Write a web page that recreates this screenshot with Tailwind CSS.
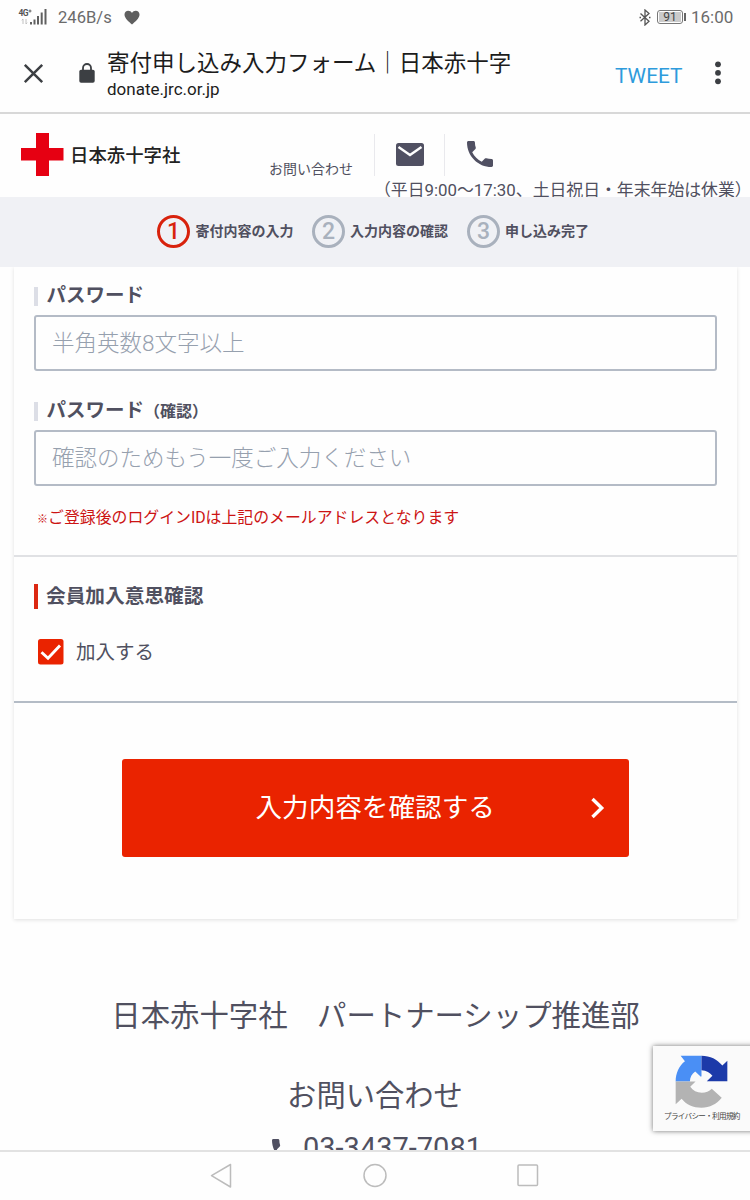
<!DOCTYPE html>
<html lang="ja">
<head>
<meta charset="utf-8">
<title>寄付申し込み入力フォーム｜日本赤十字社</title>
<script src="https://cdn.jsdelivr.net/npm/@tailwindcss/browser@4"></script>
</head>
<body class="bg-white">
<div class="relative flex h-[1200px] w-[750px] flex-col overflow-hidden bg-[#fefefe] font-[Roboto,'Noto_Sans_CJK_JP',sans-serif] text-[#505060]">

  <!-- Status bar -->
  <div class="flex h-[34px] shrink-0 items-center pl-[18px] pr-[17px] text-[16.600px] leading-[34px] text-[#6b6b6b]">
    <svg class="h-[18px] w-[30px]" viewBox="0 0 30 18">
      <text x="0.5" y="7.5" font-family="Roboto" font-weight="700" font-size="8.5" fill="#555" textLength="10">4G</text>
      <path d="M10.5 3h3M12 1.500v3" stroke="#555" stroke-width="0.9"/>
      <path d="M5 11v5M3.800 12.300L5 11M8 11v5M9.200 14.700L8 16" stroke="#bbb" stroke-width="0.9" fill="none"/>
      <path d="M13 14v2.500M16.500 11.500v5M20 8v8.500M23.700 4.500v12M27.500 1v15.500" stroke="#606060" stroke-width="2"/>
    </svg>
    <span class="ml-[10px] w-[66px] pt-px">246B/s</span>
    <svg class="h-[15px] w-[16px]" viewBox="0 0 16 15"><path d="M8 14.500C5 12 .5 8.500.5 4.600.5 2.200 2.200.7 4.200.7c1.600 0 3 .8 3.800 2.200C8.800 1.500 10.200.7 11.800.7c2 0 3.700 1.500 3.700 3.900C15.500 8.500 11 12 8 14.500z" fill="#5f5f5f"/></svg>
    <div class="ml-auto flex items-center">
      <svg class="h-[17px] w-[12px]" viewBox="0 0 12 17"><path d="M1.500 4.500l8.500 7.800-4 3.700V1l4 3.500-8.500 7.800" fill="none" stroke="#555" stroke-width="1.300"/><path d="M.5 8.400h1.500M10 8.400h1.500" stroke="#555" stroke-width="1.500"/></svg>
      <span class="ml-[6px] flex h-[14px] w-[26px] items-center justify-center rounded-[3px] border border-[#777] p-px"><span class="h-full w-full bg-[#cbcbcb] text-center text-[12px] leading-[11px] text-[#444]">91</span></span>
      <span class="ml-px h-[8px] w-[2px] bg-[#666]"></span>
      <span class="ml-[5px] w-[42px] text-[17px]">16:00</span>
    </div>
  </div>

  <!-- Browser toolbar -->
  <div class="flex h-[80px] shrink-0 items-center border-b-2 border-[#d8d8d8] pl-[23px]">
    <svg class="h-[21px] w-[21px]" viewBox="0 0 21 21"><path d="M1.800 1.800l17.400 17.400M19.200 1.800L1.800 19.200" stroke="#3c3f43" stroke-width="2.500"/></svg>
    <svg class="ml-[35px] h-[20px] w-[16px]" viewBox="0 0 16 20"><rect x=".3" y="6.700" width="15.400" height="13" rx="1.800" fill="#3c3f43"/><path d="M4 7.500V5a4 4 0 0 1 8 0v2.500" fill="none" stroke="#3c3f43" stroke-width="1.800"/></svg>
    <div class="ml-[12px] h-[78px] w-[430px] pt-[14px] text-[#1c1c1c]">
      <div class="h-[30px] whitespace-nowrap text-[22.5px] leading-[30px]">寄付申し込み入力フォーム｜日本赤十字</div>
      <div class="h-[22px] text-[17px] leading-[22px]">donate.jrc.or.jp</div>
    </div>
    <span class="ml-[78px] w-[68px] pt-[7px] text-[20.900px] text-[#2e9bdc]">TWEET</span>
    <svg class="ml-[31px] h-[24px] w-[8px]" viewBox="0 0 8 24"><g fill="#3c3f43"><circle cx="4" cy="3.300" r="2.900"/><circle cx="4" cy="11.800" r="2.900"/><circle cx="4" cy="20.300" r="2.900"/></g></svg>
  </div>

  <!-- Site header -->
  <header class="flex h-[83px] shrink-0 overflow-hidden">
    <div class="flex w-[255px] items-start pl-[21px] pt-[19px]">
      <svg class="h-[43px] w-[43px]" viewBox="0 0 43 43"><path d="M15 0h13v15h14.500v12.500H28V43H15V27.500H0V15h15z" fill="#e60012"/></svg>
      <span class="ml-[6px] mt-[7px] whitespace-nowrap text-[18.400px] font-medium leading-[32px] text-[#222]">日本赤十字社</span>
    </div>
    <span class="w-[119px] pl-[14px] pt-[45px] text-[14px] leading-[20px]">お問い合わせ</span>
    <div class="w-[376px]">
      <div class="mt-[20px] flex h-[42px] border-l border-[#e9e9ed]">
        <div class="flex w-[70px] items-center justify-center border-r border-[#e9e9ed]">
          <svg class="h-[24px] w-[28px]" viewBox="0 0 28 24"><rect width="28" height="23" rx="2.500" fill="#505062"/><path d="M2.500 4L14 12 25.500 4" fill="none" stroke="#fefefe" stroke-width="2.400"/></svg>
        </div>
        <svg class="ml-[22px] mt-[7px] h-[26px] w-[26px]" viewBox="3 3 18 18"><path d="M6.620 10.790c1.440 2.830 3.760 5.140 6.590 6.590l2.200-2.200c.27-.27.670-.36 1.020-.24 1.120.37 2.330.57 3.570.57.55 0 1 .45 1 1V20c0 .55-.45 1-1 1-9.390 0-17-7.610-17-17 0-.55.45-1 1-1h3.500c.55 0 1 .45 1 1 0 1.250.2 2.450.57 3.570.11.35.03.74-.25 1.020l-2.200 2.200z" fill="#505062"/></svg>
      </div>
      <div class="mt-[2px] h-[19px] whitespace-nowrap text-[16.850px] leading-[24px]">（平日9:00〜17:30、土日祝日・年末年始は休業）</div>
    </div>
  </header>

  <!-- Steps -->
  <ol class="flex h-[70px] shrink-0 items-center bg-[#f0f1f5] pb-px pl-[157px] text-[14px] font-bold">
    <li class="flex w-[155px] items-center"><span class="mr-[5.500px] flex h-[33px] w-[33px] items-center justify-center rounded-full border-[3px] border-[#d8220c] text-[23px] font-medium leading-none text-[#d8220c]">1</span>寄付内容の入力</li>
    <li class="flex w-[155px] items-center"><span class="mr-[5px] flex h-[33px] w-[33px] items-center justify-center rounded-full border-[3px] border-[#a9b1bd] text-[23px] font-medium leading-none text-[#a9b1bd]">2</span>入力内容の確認</li>
    <li class="flex items-center"><span class="mr-[5px] flex h-[33px] w-[33px] items-center justify-center rounded-full border-[3px] border-[#a9b1bd] text-[23px] font-medium leading-none text-[#a9b1bd]">3</span>申し込み完了</li>
  </ol>

  <!-- Form card -->
  <main class="ml-[14px] mr-[13px] flex h-[652px] shrink-0 flex-col bg-[#fefefe] shadow-[0_1px_4px_rgba(0,0,0,0.12)] [clip-path:inset(0_-6px_-8px_-6px)]">
    <div class="h-[288px] pl-[20px] pr-[20px] pt-[15px]">
      <div class="flex h-[33px] items-start">
        <span class="mt-[5px] h-[19px] w-[4px] bg-[#dcdee6]"></span>
        <span class="ml-[8.500px] mt-px text-[19.500px] font-bold leading-[26px]">パスワード</span>
      </div>
      <div class="flex h-[56px] items-center rounded-[3px] border-2 border-[#b4bbc6] pl-[16px] pt-[2px] text-[22.500px] font-light text-[#96a0ae]">半角英数8文字以上</div>
      <div class="mt-[27px] flex h-[32px] items-start">
        <span class="mt-[4px] h-[19px] w-[4px] bg-[#dcdee6]"></span>
        <span class="ml-[8.500px] text-[19.500px] font-bold leading-[26px]">パスワード<span class="text-[16px]">（確認）</span></span>
      </div>
      <div class="flex h-[56px] items-center rounded-[3px] border-2 border-[#b4bbc6] pl-[16px] pt-[2px] text-[22.500px] font-light text-[#96a0ae]">確認のためもう一度ご入力ください</div>
      <p class="ml-[3px] mt-[20px] whitespace-nowrap text-[15.880px] leading-[24px] text-[#cc1414]"><span class="text-[11px]">※</span>ご登録後のログインIDは上記のメールアドレスとなります</p>
    </div>
    <div class="h-[148px] border-y-2 border-b-[#b4bcc6] border-t-[#e0e1e4] pl-[20px] pt-[26px]">
      <div class="flex h-[26px] items-center">
        <span class="h-[25px] w-[4px] bg-[#dc2812]"></span>
        <span class="ml-[8px] pt-[2px] text-[19.700px] font-bold leading-[26px]">会員加入意思確認</span>
      </div>
      <div class="ml-[4px] mt-[30px] flex h-[26px] items-center">
        <svg class="h-[26px] w-[26px]" viewBox="0 0 26 26"><rect width="25.500" height="25.500" rx="2.500" fill="#ea2300"/><path d="M3.500 13.200l6.500 6L22 6.500" fill="none" stroke="#fff" stroke-width="2.900"/></svg>
        <span class="ml-[12px] pt-px text-[19.500px] leading-[26px]">加入する</span>
      </div>
    </div>
    <div class="flex pl-[108px] pt-[56px]">
      <div class="flex h-[98px] w-[507px] items-center rounded-[3px] bg-[#ea2300] text-white">
        <span class="ml-[133.500px] w-[335.500px] text-[26.600px]">入力内容を確認する</span>
        <svg class="h-[22px] w-[14px]" viewBox="0 0 14 22"><path d="M1.500 2l9.200 9-9.200 9" fill="none" stroke="#fff" stroke-width="3.400"/></svg>
      </div>
    </div>
  </main>

  <!-- Contact -->
  <footer class="h-[231px] shrink-0 overflow-hidden text-center">
    <p class="mt-[77px] whitespace-nowrap pl-px text-[29.400px] leading-[40px]">日本赤十字社　パートナーシップ推進部</p>
    <p class="mt-[40px] text-[29.300px] leading-[40px]">お問い合わせ</p>
    <p class="mt-[12px] flex pl-[272px] text-[29px] leading-[40px]">
      <svg class="mr-[7px] mt-[11px] h-[24px] w-[24px]" viewBox="3 3 18 18"><path d="M6.620 10.790c1.440 2.830 3.760 5.140 6.590 6.590l2.200-2.200c.27-.27.670-.36 1.020-.24 1.120.37 2.330.57 3.570.57.55 0 1 .45 1 1V20c0 .55-.45 1-1 1-9.390 0-17-7.610-17-17 0-.55.45-1 1-1h3.500c.55 0 1 .45 1 1 0 1.250.2 2.450.57 3.570.11.35.03.74-.25 1.020l-2.200 2.200z" fill="#505062"/></svg>03-3437-7081</p>
  </footer>

  <!-- Navigation bar -->
  <nav class="flex h-[50px] shrink-0 border-t-2 border-[#e2e2e2] bg-[#fefefe]">
    <svg class="h-[48px] w-full" viewBox="0 0 750 48" fill="none" stroke="#bcbcbc" stroke-width="1.500"><path d="M230.500 12.500v22.500L211.500 23.700z" stroke-linejoin="round"/><circle cx="375" cy="23.500" r="11"/><rect x="518" y="13" width="19.500" height="20.500" rx="1"/></svg>
  </nav>

  <!-- reCAPTCHA badge -->
  <div class="absolute left-[653px] top-[1046px] flex h-[85px] w-[110px] flex-col bg-[#fafafa] pl-[11px] pt-[9px] shadow-[0_0_5px_rgba(0,0,0,0.55)]">
    <svg class="ml-[11px] h-[53px] w-[53px]" viewBox="135 75 160 160">
      <path d="M215 77H152l13 17C147 108 137 130 137 155h43c0-12 6-23 16-30l17 16 2-2z" fill="#4a8ff5"/>
      <path d="M215 77c26 0 48 11 63 30l15-15v62h-62l17-16c-7-10-18-16-33-17z" fill="#1c3aa9"/>
      <path d="M137 155h60l-16 16c8 12 20 18 35 18 12 0 22-4 30-12l30 27c-15 19-36 30-61 30-25 0-46-9-60-27l-18 17z" fill="#b3b3b3"/>
    </svg>
    <span class="mt-[3px] whitespace-nowrap text-[7.600px] leading-[12px] tracking-[-0.700px] text-[#444]">プライバシー・利用規約</span>
  </div>
</div>
</body>
</html>
